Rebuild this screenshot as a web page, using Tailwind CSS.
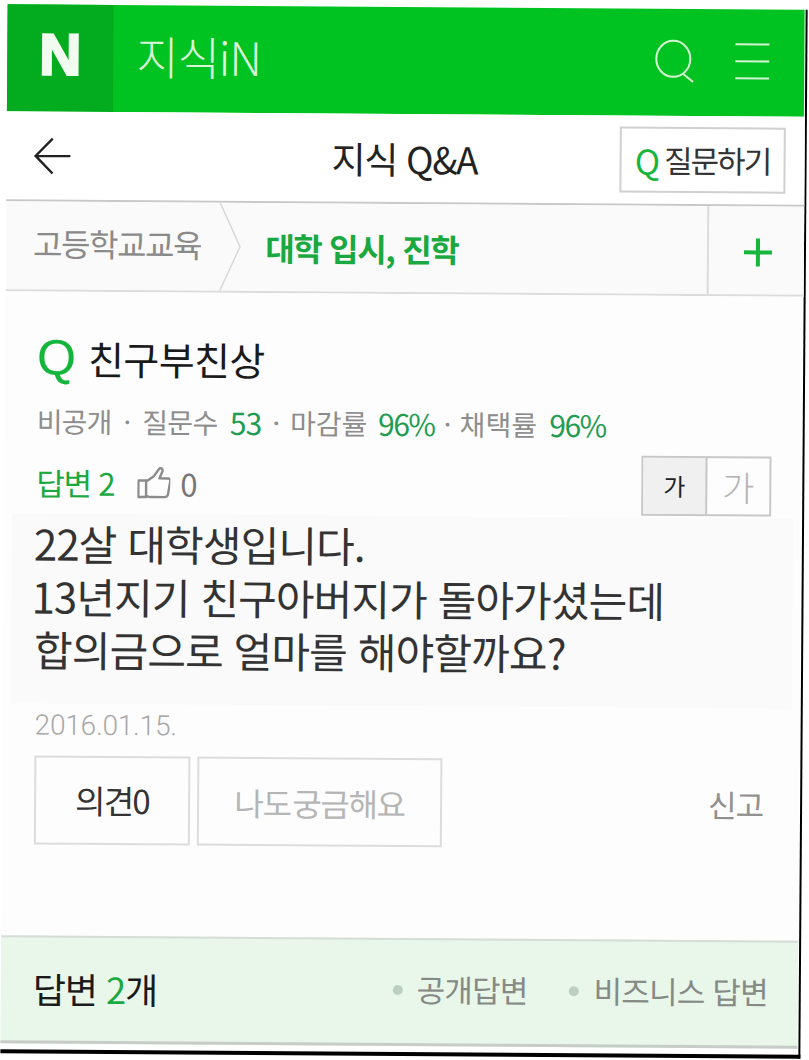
<!DOCTYPE html>
<html lang="ko">
<head>
<meta charset="utf-8">
<script src="https://cdn.jsdelivr.net/npm/@tailwindcss/browser@4"></script>
</head>
<body class="bg-white overflow-hidden">
<div class="w-[809px] h-[1060px] overflow-hidden font-['Noto_Sans_CJK_KR','Noto_Sans',sans-serif]">
<div class="ml-[4px] mt-[7px] w-[800px] h-[1049px] pb-[6px] rotate-[0.4deg] bg-white flex flex-col border-b-[4px] border-r-2 border-b-black border-r-black">
  <header class="h-[107px] bg-[#00c322] flex items-center shrink-0 mr-[1px]">
    <div class="w-[106px] h-full bg-[#03ac1f] flex items-center justify-center text-[#f2fbf0] text-[58px] font-black leading-none font-['Liberation_Sans',sans-serif] [-webkit-text-stroke:2.5px_#f2fbf0] pb-[8px]">N</div>
    <div class="ml-[23px] -mt-[8px] text-[46px] font-light leading-none tracking-[-1.1px] text-[#d9f6d5]">지식iN</div>
    <div class="ml-auto flex items-center gap-[38px] pr-[34px] -mt-[4px]">
      <svg class="w-[42px] h-[44px]" viewBox="0 0 42 44" fill="none" stroke="#d4f5d0" stroke-width="2"><ellipse cx="19" cy="20" rx="17" ry="18"/><path d="M29 35l10 8"/></svg>
      <svg class="w-[36px] h-[38px]" viewBox="0 0 36 38" fill="none" stroke="#d4f5d0" stroke-width="2"><path d="M1 2h34M1 19h34M1 36h34"/></svg>
    </div>
  </header>
  <div class="h-[90px] shrink-0 border-b-2 border-[#c8c8c8] flex items-center relative bg-white">
    <svg class="ml-[27px] w-[37px] h-[37px]" viewBox="0 0 37 37" fill="none" stroke="#222" stroke-width="2.4"><path d="M19 1L2 18.500 19 36M2 18.500h35"/></svg>
    <div class="absolute left-[325px] top-[20px] text-[37px] leading-[48px] tracking-[-1.300px] text-[#222]">지식 Q&amp;A</div>
    <div class="ml-auto mr-[19px] w-[166px] h-[66px] border-2 border-[#d0d0d0] flex items-center justify-center gap-[6px] text-[31px] tracking-[-2px] text-[#333]"><span class="text-[#17b53c] text-[34px]">Q</span><span>질문하기</span></div>
  </div>
  <div class="h-[90px] shrink-0 border-b-2 border-[#dcdcdc] bg-[#fafafa] flex items-center relative">
    <span class="ml-[27px] text-[32px] tracking-[-1.4px] text-[#8a8a8a] -mt-[6px]">고등학교교육</span>
    <svg class="absolute left-[213px] top-0 w-[24px] h-[88px]" viewBox="0 0 24 88" fill="none" stroke="#d8d8d8" stroke-width="1.500"><path d="M1 0l20 44L1 88"/></svg>
    <span class="ml-[64px] text-[32px] font-bold tracking-[-1.300px] text-[#1aa840]">대학 입시, 진학</span>
    <div class="ml-auto w-[97px] h-full border-l-2 border-[#dcdcdc] flex items-center justify-center">
      <svg class="w-[30px] h-[30px] mt-[4px] ml-[2px]" viewBox="0 0 30 30" fill="#17b53c"><path d="M13 1h4v12h12v4H17v12h-4V17H1v-4h12z"/></svg>
    </div>
  </div>
  <section class="flex-1 relative flex flex-col bg-[#fdfdfd] mr-[1px]">
    <div class="ml-[32px] mt-[36px] flex items-center h-[60px]">
      <span class="w-[46px] text-[50px] leading-none font-normal text-[#13b53a] font-['Liberation_Sans',sans-serif] [-webkit-text-stroke:0.2px_#13b53a]">Q</span>
      <span class="ml-[5px] text-[39px] leading-none tracking-[-0.6px] text-[#1a1a1a]">친구부친상</span>
    </div>
    <div class="ml-[32px] mt-[15px] h-[36px] flex items-center text-[28px] leading-none tracking-[-0.9px] text-[#8d8d8d]">
      <span>비공개</span><span class="mx-[12px]">·</span><span class="tracking-[-0.6px]">질문수</span><span class="ml-[12px] text-[30px] text-[#1f9c50]">53</span><span class="mx-[11px]">·</span><span class="tracking-[-0.1px]">마감률</span><span class="ml-[11px] text-[30px] tracking-[-1.500px] text-[#1f9c50]">96%</span><span class="mx-[9px]">·</span><span class="tracking-[0.2px]">채택률</span><span class="ml-[12px] text-[30px] tracking-[-1.500px] text-[#1f9c50]">96%</span>
    </div>
    <div class="ml-[32px] mr-[30px] mt-[13px] h-[60px] flex items-center">
      <span class="text-[31px] leading-none tracking-[-1.2px] text-[#1aa840]">답변 2</span>
      <svg class="ml-[23px] w-[33px] h-[33px]" viewBox="0 0 30 30" fill="none" stroke="#8c8c8c" stroke-width="2.200" stroke-linejoin="round"><path d="M1 13h7v15H1zM8 14l7-5 5-7c1-1 3 0 3 2l-3 7h8c1 0 2 1 2 2l-2 12c0 2-2 3-3 3H12c-2 0-4-1-4-2"/></svg>
      <span class="ml-[10px] text-[31px] leading-none text-[#777]">0</span>
      <div class="ml-auto flex h-[60px] w-[130px] border-2 border-[#c8c8c8]">
        <div class="w-[64px] bg-[#f0f0f0] border-r-2 border-[#c8c8c8] flex items-center justify-center text-[24px] text-[#222]">가</div>
        <div class="flex-1 flex items-center justify-center text-[35px] font-light text-[#b5b5b5]">가</div>
      </div>
    </div>
    <div class="mt-[2px] mx-[8px] h-[190px] bg-[#fafafa] pl-[20px] pt-[2px] text-[42px] leading-[53px] tracking-[-0.9px] text-[#333] whitespace-nowrap">
      <p class="pl-[2px]">22살 대학생입니다.</p>
      <p>13년지기 친구아버지가 돌아가셨는데</p>
      <p class="pl-[3px]">합의금으로 얼마를 해야할까요?</p>
    </div>
    <div class="ml-[32px] mt-[5px] text-[28px] leading-[34px] tracking-[-0.2px] font-['Roboto',sans-serif] font-light text-[#a8a8a8]">2016.01.15.</div>
    <div class="ml-[32px] mr-[36px] mt-[13px] flex items-center">
      <div class="w-[156px] h-[89px] border-2 border-[#dcdcdc] flex items-center justify-center text-[33px] tracking-[-1.700px] text-[#333]">의견0</div>
      <div class="ml-[7px] w-[245px] h-[89px] border-2 border-[#dcdcdc] flex items-center justify-center text-[32px] tracking-[-1.300px] [word-spacing:-6px] text-[#b5b5b5]">나도 궁금해요</div>
      <span class="ml-auto text-[31px] tracking-[-1px] text-[#909090]">신고</span>
    </div>
    <footer class="mt-auto h-[108px] bg-[#e9f6ea] border-t-2 border-[#d6dcd6] border-b-[3px] border-b-[#c8ccc8] flex items-center pl-[32px] pr-[30px] pb-[4px]">
      <span class="text-[36px] tracking-[-1px] text-[#1a1a1a]">답변 <span class="text-[#1aa840]">2</span>개</span>
      <span class="ml-auto w-[10px] h-[10px] rounded-full bg-[#bcd0bf]"></span>
      <span class="ml-[14px] text-[31px] tracking-[-0.8px] text-[#868a86]">공개답변</span>
      <span class="ml-[41px] w-[10px] h-[10px] rounded-full bg-[#bcd0bf]"></span>
      <span class="ml-[15px] text-[31px] tracking-[-0.8px] text-[#868a86]">비즈니스 답변</span>
    </footer>
  </section>
</div>
</div>
</body>
</html>
